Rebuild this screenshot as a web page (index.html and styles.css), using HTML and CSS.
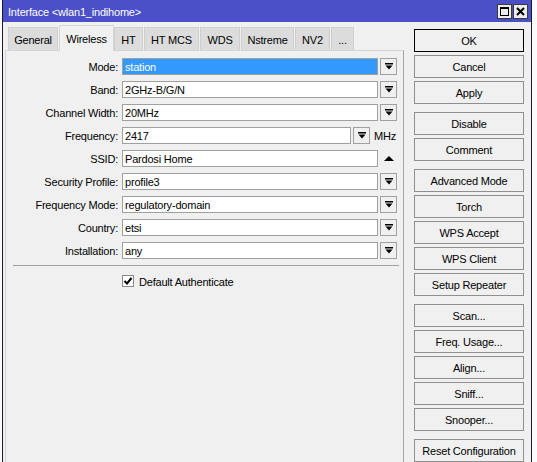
FILE: index.html
```html
<!DOCTYPE html>
<html>
<head>
<meta charset="utf-8">
<link rel="stylesheet" href="styles.css">
</head>
<body>
<div class="window">
  <div class="titlebar">
    <span class="title">Interface &lt;wlan1_indihome&gt;</span>
    <div class="tbtns">
      <span class="tb"><svg width="9" height="9" viewBox="0 0 9 9"><rect x="0.5" y="1" width="8" height="7.5" fill="none" stroke="#000" stroke-width="1"/><rect x="0" y="0" width="9" height="2" fill="#000"/></svg></span>
      <span class="tb"><svg width="9" height="9" viewBox="0 0 9 9"><path d="M1 1 L8 8 M8 1 L1 8" stroke="#000" stroke-width="2"/></svg></span>
    </div>
  </div>
  <div class="content">
    <div class="main">
      <div class="tabs">
        <span class="tab w-general">General</span>
        <span class="tab active w-wireless">Wireless</span>
        <span class="tab w-ht">HT</span>
        <span class="tab w-htmcs">HT MCS</span>
        <span class="tab w-wds">WDS</span>
        <span class="tab w-nstreme">Nstreme</span>
        <span class="tab w-nv2">NV2</span>
        <span class="tab w-more">...</span>
      </div>
      <div class="panel">
        <div class="row"><span class="label">Mode:</span><span class="input selected">station</span><span class="dd"><svg width="8" height="7" viewBox="0 0 8 7"><rect x="0" y="0" width="8" height="1.5" fill="#000"/><polygon points="0.5,2.5 7.5,2.5 4,6.5" fill="#000"/></svg></span></div>
        <div class="row"><span class="label">Band:</span><span class="input">2GHz-B/G/N</span><span class="dd"><svg width="8" height="7" viewBox="0 0 8 7"><rect x="0" y="0" width="8" height="1.5" fill="#000"/><polygon points="0.5,2.5 7.5,2.5 4,6.5" fill="#000"/></svg></span></div>
        <div class="row"><span class="label">Channel Width:</span><span class="input">20MHz</span><span class="dd"><svg width="8" height="7" viewBox="0 0 8 7"><rect x="0" y="0" width="8" height="1.5" fill="#000"/><polygon points="0.5,2.5 7.5,2.5 4,6.5" fill="#000"/></svg></span></div>
        <div class="row"><span class="label">Frequency:</span><span class="input short">2417</span><span class="dd"><svg width="8" height="7" viewBox="0 0 8 7"><rect x="0" y="0" width="8" height="1.5" fill="#000"/><polygon points="0.5,2.5 7.5,2.5 4,6.5" fill="#000"/></svg></span><span class="unit">MHz</span></div>
        <div class="row"><span class="label">SSID:</span><span class="input">Pardosi Home</span><span class="up"><svg width="10" height="5" viewBox="0 0 10 5"><polygon points="0,5 10,5 5,0" fill="#000"/></svg></span></div>
        <div class="row"><span class="label">Security Profile:</span><span class="input">profile3</span><span class="dd"><svg width="8" height="7" viewBox="0 0 8 7"><rect x="0" y="0" width="8" height="1.5" fill="#000"/><polygon points="0.5,2.5 7.5,2.5 4,6.5" fill="#000"/></svg></span></div>
        <div class="row"><span class="label">Frequency Mode:</span><span class="input">regulatory-domain</span><span class="dd"><svg width="8" height="7" viewBox="0 0 8 7"><rect x="0" y="0" width="8" height="1.5" fill="#000"/><polygon points="0.5,2.5 7.5,2.5 4,6.5" fill="#000"/></svg></span></div>
        <div class="row"><span class="label">Country:</span><span class="input">etsi</span><span class="dd"><svg width="8" height="7" viewBox="0 0 8 7"><rect x="0" y="0" width="8" height="1.5" fill="#000"/><polygon points="0.5,2.5 7.5,2.5 4,6.5" fill="#000"/></svg></span></div>
        <div class="row"><span class="label">Installation:</span><span class="input">any</span><span class="dd"><svg width="8" height="7" viewBox="0 0 8 7"><rect x="0" y="0" width="8" height="1.5" fill="#000"/><polygon points="0.5,2.5 7.5,2.5 4,6.5" fill="#000"/></svg></span></div>
        <div class="sep"></div>
        <div class="checkrow">
          <span class="checkbox"><svg width="10" height="10" viewBox="0 0 10 10"><path d="M1.5 5 L4 7.5 L8.5 2" fill="none" stroke="#000" stroke-width="2"/></svg></span>
          <span class="checklabel">Default Authenticate</span>
        </div>
      </div>
    </div>
    <div class="side">
      <div class="group">
        <span class="btn default">OK</span>
        <span class="btn">Cancel</span>
        <span class="btn">Apply</span>
      </div>
      <div class="group">
        <span class="btn">Disable</span>
        <span class="btn">Comment</span>
      </div>
      <div class="group">
        <span class="btn">Advanced Mode</span>
        <span class="btn">Torch</span>
        <span class="btn">WPS Accept</span>
        <span class="btn">WPS Client</span>
        <span class="btn">Setup Repeater</span>
      </div>
      <div class="group">
        <span class="btn">Scan...</span>
        <span class="btn">Freq. Usage...</span>
        <span class="btn">Align...</span>
        <span class="btn">Sniff...</span>
        <span class="btn">Snooper...</span>
      </div>
      <div class="group">
        <span class="btn">Reset Configuration</span>
      </div>
    </div>
  </div>
</div>
</body>
</html>
```
FILE: styles.css
```css
* { box-sizing: border-box; }
html, body { margin: 0; padding: 0; }
body {
  width: 537px;
  height: 462px;
  overflow: hidden;
  background: #fbfbfb;
  font-family: "Liberation Sans", Arial, sans-serif;
  font-size: 11px;
  letter-spacing: -0.2px;
  color: #000;
}
.window {
  margin-left: 2px;
  width: 530px;
  height: 480px;
  border-left: 1px solid #1c1c28;
  border-right: 1px solid #1c1c28;
  background: #f0f0f0;
}
.titlebar {
  height: 22px;
  background: #4b50c8;
  color: #fff;
  display: flex;
  align-items: center;
  justify-content: space-between;
  padding: 0 3px 0 5px;
}
.title { font-size: 11px; letter-spacing: -0.2px; padding-top: 1px; }
.tbtns { display: flex; gap: 1px; }
.tb {
  width: 15px;
  height: 15px;
  background: #ececec;
  border: 1px solid #3a3a3a;
  display: flex;
  align-items: center;
  justify-content: center;
}
.content { display: flex; align-items: flex-start; }
.main { width: 401px; padding-left: 2px; }
.tabs {
  height: 28px;
  display: flex;
  align-items: flex-end;
  padding-left: 3px;
}
.tab {
  height: 23px;
  background: #dcdcdc;
  border: 1px solid #cfcfcf;
  border-bottom: none;
  display: flex;
  align-items: center;
  justify-content: center;
  padding-top: 2px;
  margin-right: 1px;
}
.tab.active {
  height: 26px;
  margin-bottom: -1px;
  background: #f0f0f0;
  border-color: #d6d6d6;
  position: relative;
  z-index: 1;
  padding-top: 0;
  margin-right: 0;
}
.w-general { width: 50px; }
.w-wireless { width: 55px; }
.w-ht { width: 29px; }
.w-htmcs { width: 55px; }
.w-wds { width: 40px; }
.w-nstreme { width: 53px; }
.w-nv2 { width: 35px; }
.w-more { width: 23px; }
.panel {
  width: 399px;
  height: 430px;
  border-top: 1px solid #d4d4d4;
  border-left: 1px solid #d4d4d4;
  border-right: 1px solid #a6a6a6;
  padding-top: 7px;
}
.row {
  display: flex;
  align-items: center;
  height: 17px;
  margin-bottom: 6px;
}
.label {
  width: 112px;
  text-align: right;
  margin-right: 4px;
  padding-top: 1px;
}
.input {
  width: 256px;
  height: 17px;
  background: #fff;
  border: 1px solid #a0a0a0;
  padding-left: 2px;
  line-height: 16px;
  white-space: nowrap;
}
.input.short { width: 229px; }
.input.selected { background: #3399ff; color: #fff; }
.dd {
  width: 17px;
  height: 17px;
  margin-left: 2px;
  background: #f0f0f0;
  border: 1px solid #a0a0a0;
  display: flex;
  align-items: center;
  justify-content: center;
}
.unit { margin-left: 4px; }
.up {
  width: 17px;
  height: 17px;
  margin-left: 2px;
  display: flex;
  align-items: center;
  justify-content: center;
}
.sep {
  height: 1px;
  background: #a0a0a0;
  margin: 1px 4px 0 7px;
}
.checkrow {
  display: flex;
  align-items: center;
  margin-top: 9px;
  padding-left: 116px;
  height: 12px;
}
.checkbox {
  width: 12px;
  height: 12px;
  background: #fff;
  border: 1px solid #8c8c8c;
  display: flex;
  align-items: center;
  justify-content: center;
}
.checklabel { margin-left: 5px; padding-top: 1px; }
.side {
  width: 110px;
  margin-left: 10px;
  margin-top: 7px;
  display: flex;
  flex-direction: column;
}
.group {
  display: flex;
  flex-direction: column;
  gap: 3px;
  margin-bottom: 8px;
}
.btn {
  height: 23px;
  background: #f0f0f0;
  border: 1px solid #8f8f8f;
  display: flex;
  align-items: center;
  justify-content: center;
  white-space: nowrap;
  padding-top: 1px;
}
.btn.default { border-color: #000; }
```
